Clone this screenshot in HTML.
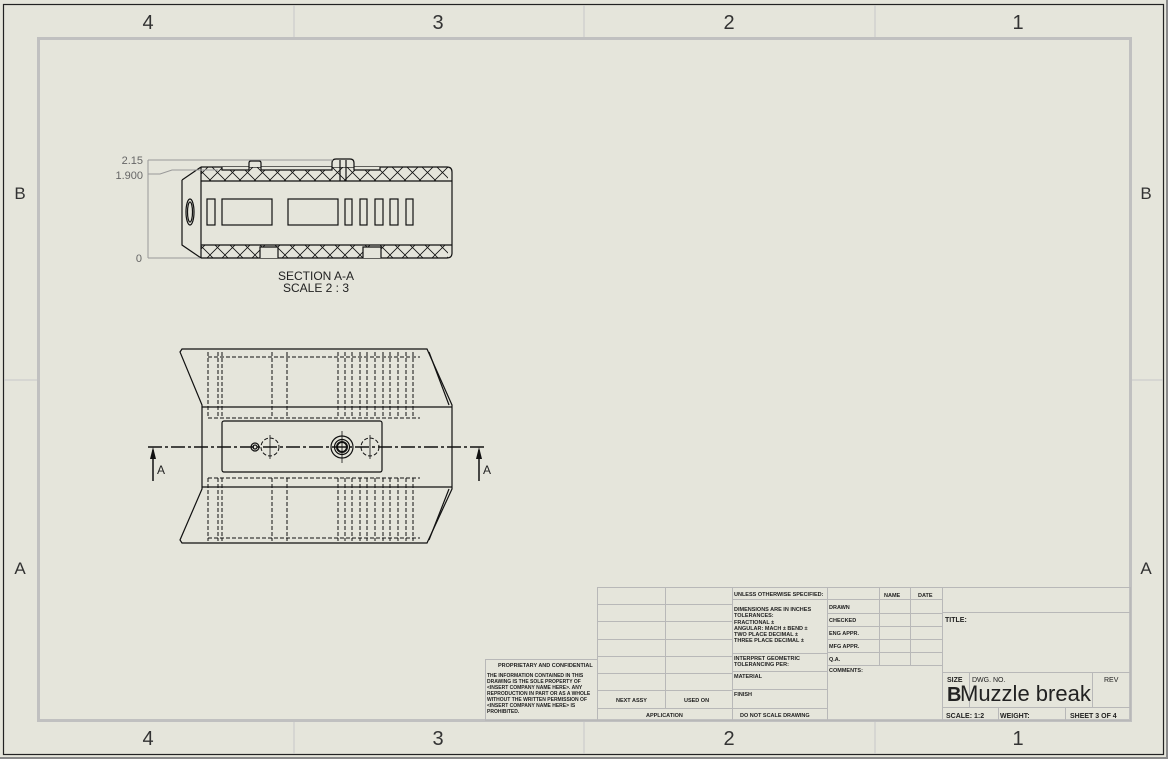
<!DOCTYPE html>
<html><head><meta charset="utf-8"><style>
html,body{margin:0;padding:0;background:#e5e5db;}
svg{display:block;}
text{font-family:"Liberation Sans",sans-serif;}
</style></head><body>
<svg width="1168" height="759" viewBox="0 0 1168 759" xmlns="http://www.w3.org/2000/svg">
<defs>
<pattern id="hx" width="15" height="15" patternUnits="userSpaceOnUse">
<path d="M0 15 L15 0 M0 0 L15 15" stroke="#111" stroke-width="0.8"/>
</pattern>
</defs>
<rect x="0" y="0" width="1168" height="759" fill="#8a8a8a"/>
<rect x="0" y="0" width="1166" height="757" fill="#e5e5db"/>
<rect x="3.5" y="4.5" width="1160" height="750" fill="none" stroke="#222" stroke-width="1.2"/>
<rect x="38.5" y="38.5" width="1092" height="682" fill="none" stroke="#c0c0c0" stroke-width="3"/>
<g stroke="#c8c8c8" stroke-width="1">
<line x1="294" y1="5" x2="294" y2="37"/><line x1="584" y1="5" x2="584" y2="37"/><line x1="875" y1="5" x2="875" y2="37"/>
<line x1="294" y1="722" x2="294" y2="754"/><line x1="584" y1="722" x2="584" y2="754"/><line x1="875" y1="722" x2="875" y2="754"/>
<line x1="4" y1="380" x2="37" y2="380"/><line x1="1132" y1="380" x2="1163" y2="380"/>
</g>
<g font-size="20" fill="#333" text-anchor="middle">
<text x="148" y="29">4</text><text x="438" y="29">3</text><text x="729" y="29">2</text><text x="1018" y="29">1</text>
<text x="148" y="745">4</text><text x="438" y="745">3</text><text x="729" y="745">2</text><text x="1018" y="745">1</text>
<text x="20" y="199" font-size="17">B</text><text x="1146" y="199" font-size="17">B</text>
<text x="20" y="574" font-size="17">A</text><text x="1146" y="574" font-size="17">A</text>
</g>

<!-- SECTION VIEW -->
<g stroke="#111" stroke-width="1.2" fill="none">
<rect x="201" y="167" width="247" height="14" fill="url(#hx)" stroke="none"/>
<rect x="201" y="245" width="247" height="13" fill="url(#hx)" stroke="none"/>
<path d="M201 167 L447 167 Q452 167 452 172 L452 253 Q452 258 447 258 L201 258"/>
<path d="M201 167 L201 258 M182 180 L201 167 M182 180 L182 245 L201 258"/>
<line x1="201" y1="181" x2="452" y2="181"/><line x1="201" y1="245" x2="452" y2="245"/>
<path d="M222 167 L222 170 L249 170 L249 163 Q249 161 251 161 L259 161 Q261 161 261 163 L261 170 L332 170 L332 163 Q332 159 336 159 L350 159 Q354 159 354 163 L354 170 L380 170 L380 167" fill="#e5e5db"/>
<path d="M260 258 L260 247 L278 247 L278 258 M363 258 L363 247 L381 247 L381 258" fill="#e5e5db"/>
<line x1="340" y1="160" x2="340" y2="181"/><line x1="346" y1="160" x2="346" y2="181"/>
<ellipse cx="190" cy="212" rx="4" ry="13"/><ellipse cx="190" cy="212" rx="2.5" ry="10"/>
<rect x="207" y="199" width="8" height="26"/><rect x="222" y="199" width="50" height="26"/><rect x="288" y="199" width="50" height="26"/>
<rect x="345" y="199" width="7" height="26"/><rect x="360" y="199" width="7" height="26"/><rect x="375" y="199" width="8" height="26"/><rect x="390" y="199" width="8" height="26"/><rect x="406" y="199" width="7" height="26"/>
</g>
<g stroke="#999" stroke-width="1" fill="none">
<line x1="148" y1="160" x2="333" y2="160"/><line x1="148" y1="160" x2="148" y2="258"/><line x1="148" y1="258" x2="200" y2="258"/>
<path d="M148 174 L160 174 L172 170 L218 170"/>
</g>
<g font-size="11" fill="#666" text-anchor="end">
<text x="143" y="164">2.15</text><text x="143" y="179">1.900</text><text x="142" y="262">0</text>
</g>
<g font-size="12" fill="#222" text-anchor="middle">
<text x="316" y="280">SECTION A-A</text><text x="316" y="292">SCALE 2 : 3</text>
</g>

<!-- TOP VIEW -->
<g stroke="#111" stroke-width="1.2" fill="none">
<path d="M182 349 L427 349 L452 405 L452 489 L427 543 L182 543 L180 540 L202 489 L202 405 L180 352 Z"/>
<path d="M429 352 L449 405 M429 540 L449 489"/>
<line x1="202" y1="407" x2="452" y2="407"/><line x1="202" y1="487" x2="452" y2="487"/>
<rect x="222" y="421" width="160" height="51" rx="2"/>
<circle cx="342" cy="447" r="11"/><circle cx="342" cy="447" r="7.5"/><circle cx="342" cy="447" r="5" stroke-width="2"/>
<circle cx="255" cy="447" r="4"/><circle cx="255" cy="447" r="2" />
</g>
<g stroke="#111" stroke-width="1" fill="none" stroke-dasharray="4,2">
<circle cx="270" cy="447" r="9"/><circle cx="370" cy="447" r="9"/>
<path d="M208 352 V418 M218 352 V418 M208 478 V541 M218 478 V541 M222 352 V418 M222 478 V541 M272 352 V418 M287 352 V418 M272 478 V541 M287 478 V541 M338 352 V418 M345 352 V418 M352 352 V418 M360 352 V418 M367 352 V418 M375 352 V418 M383 352 V418 M390 352 V418 M398 352 V418 M406 352 V418 M413 352 V418 M338 478 V541 M345 478 V541 M352 478 V541 M360 478 V541 M367 478 V541 M375 478 V541 M383 478 V541 M390 478 V541 M398 478 V541 M406 478 V541 M413 478 V541"/>
<path d="M208 357 H420 M208 418 H420 M208 478 H420 M208 538 H420"/>
</g>
<g stroke="#111" stroke-width="1.5">
<line x1="148" y1="447" x2="484" y2="447" stroke-dasharray="14,3,3,3"/>
<line x1="153" y1="450" x2="153" y2="481"/><line x1="479" y1="450" x2="479" y2="481"/>
</g>
<path d="M153 447 L150 459 L156 459 Z M479 447 L476 459 L482 459 Z" fill="#111"/>
<g font-size="12" fill="#222"><text x="157" y="474">A</text><text x="483" y="474">A</text></g>
<g stroke="#111" stroke-width="0.8">
<line x1="270" y1="435" x2="270" y2="459"/><line x1="370" y1="435" x2="370" y2="459"/><line x1="342" y1="431" x2="342" y2="463"/>
</g>

<!-- TITLE BLOCK -->
<g stroke="#b8b8b8" stroke-width="1" fill="none">
<rect x="597.5" y="587.5" width="533" height="133"/>
<rect x="485.5" y="659.5" width="112" height="61"/>
<line x1="665.5" y1="587" x2="665.5" y2="708"/><line x1="732.5" y1="587" x2="732.5" y2="721"/><line x1="827.5" y1="587" x2="827.5" y2="721"/>
<line x1="879.5" y1="587" x2="879.5" y2="665"/><line x1="910.5" y1="587" x2="910.5" y2="665"/><line x1="942.5" y1="587" x2="942.5" y2="721"/>
<path d="M597 604.5H732 M597 621.5H732 M597 639.5H732 M597 656.5H732 M597 673.5H732 M597 690.5H732 M597 708.5H827"/>
<path d="M732 599.5H827 M732 653.5H827 M732 671.5H827 M732 689.5H827"/>
<path d="M827 599.5H942 M827 613.5H942 M827 626.5H942 M827 639.5H942 M827 652.5H942 M827 665.5H942"/>
<path d="M942 612.5H1130 M942 672.5H1130 M942 707.5H1130 M969.5 672V707 M1092.5 672V707 M998.5 707V721 M1065.5 707V721"/>
</g>
<g font-size="5.5" fill="#222" font-weight="bold">
<text x="734" y="596">UNLESS OTHERWISE SPECIFIED:</text>
<text x="734" y="611">DIMENSIONS ARE IN INCHES</text>
<text x="734" y="617">TOLERANCES:</text>
<text x="734" y="624">FRACTIONAL ±</text>
<text x="734" y="630">ANGULAR: MACH ±  BEND ±</text>
<text x="734" y="636">TWO PLACE DECIMAL   ±</text>
<text x="734" y="642">THREE PLACE DECIMAL  ±</text>
<text x="734" y="660">INTERPRET GEOMETRIC</text>
<text x="734" y="666">TOLERANCING PER:</text>
<text x="734" y="678">MATERIAL</text>
<text x="734" y="696">FINISH</text>
<text x="740" y="717">DO NOT SCALE DRAWING</text>
<text x="646" y="717">APPLICATION</text>
<text x="616" y="702">NEXT ASSY</text><text x="684" y="702">USED ON</text>
<text x="884" y="597">NAME</text><text x="918" y="597">DATE</text>
<text x="829" y="609">DRAWN</text><text x="829" y="622">CHECKED</text><text x="829" y="635">ENG APPR.</text><text x="829" y="648">MFG APPR.</text><text x="829" y="661">Q.A.</text><text x="829" y="672">COMMENTS:</text>
<text x="498" y="667">PROPRIETARY AND CONFIDENTIAL</text>
</g>
<g font-size="5" fill="#222" font-weight="bold">
<text x="487" y="677">THE INFORMATION CONTAINED IN THIS</text>
<text x="487" y="683">DRAWING IS THE SOLE PROPERTY OF</text>
<text x="487" y="689">&lt;INSERT COMPANY NAME HERE&gt;. ANY</text>
<text x="487" y="695">REPRODUCTION IN PART OR AS A WHOLE</text>
<text x="487" y="701">WITHOUT THE WRITTEN PERMISSION OF</text>
<text x="487" y="707">&lt;INSERT COMPANY NAME HERE&gt; IS</text>
<text x="487" y="713">PROHIBITED.</text>
</g>
<g fill="#222">
<text x="945" y="622" font-size="7" font-weight="bold">TITLE:</text>
<text x="947" y="682" font-size="7" font-weight="bold">SIZE</text>
<text x="972" y="682" font-size="7">DWG. NO.</text>
<text x="1104" y="682" font-size="7">REV</text>
<text x="947" y="701" font-size="20" font-weight="bold">B</text>
<text x="960" y="701" font-size="22">Muzzle break</text>
<text x="946" y="718" font-size="7" font-weight="bold">SCALE: 1:2</text>
<text x="1000" y="718" font-size="7" font-weight="bold">WEIGHT:</text>
<text x="1070" y="718" font-size="7" font-weight="bold">SHEET 3 OF 4</text>
</g>
</svg>
</body></html>
